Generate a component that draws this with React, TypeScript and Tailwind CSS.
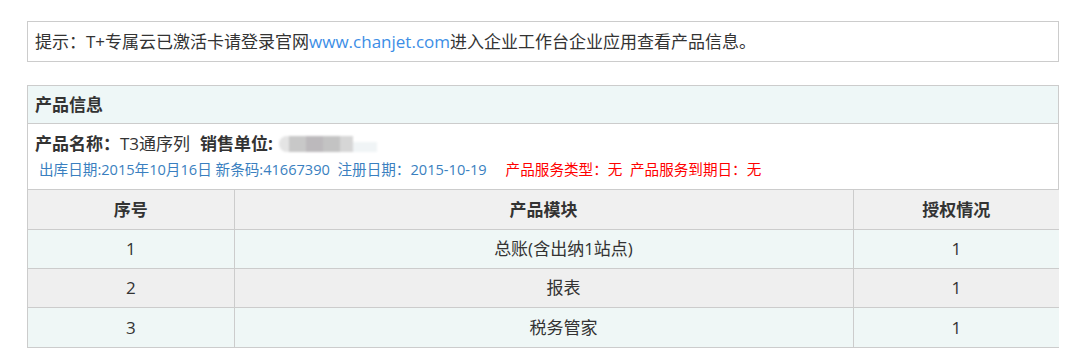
import React from 'react';

const rows = [
  { no: '1', mod: '总账(含出纳1站点)', auth: '1', bg: 'bg-[#eff7f6]' },
  { no: '2', mod: '报表', auth: '1', bg: 'bg-[#efefef]' },
  { no: '3', mod: '税务管家', auth: '1', bg: 'bg-[#eff7f6]' },
];

const App: React.FC = () => {
  return (
    <div className="bg-white w-[1076px] h-[363px] pt-[21px] pl-[27px] text-[#333] font-['Open_Sans','Noto_Sans_CJK_SC',sans-serif]">
      {/* tip */}
      <div className="w-[1032px] h-[41px] border border-[#cccccc] flex items-center pl-[7px] text-[17px]">
        提示：T+专属云已激活卡请登录官网<span className="text-[#3c8ee6]">www.chanjet.com</span>进入企业工作台企业应用查看产品信息。
      </div>

      {/* product panel */}
      <div className="w-[1032px] mt-[23px] border border-[#cccccc]">
        <div className="h-[38px] bg-[#eef7f7] border-b border-[#cccccc] flex items-center pl-[7px] text-[17px] font-bold">
          产品信息
        </div>
        <div className="h-[65px] pl-[7px] flex flex-col">
          <div className="flex items-center h-[40px] text-[17px]">
            <span className="font-bold">产品名称：</span>
            <span>T3通序列</span>
            <span className="font-bold ml-[10px]">销售单位:</span>
            <span className="ml-[6px] flex items-center h-[16px] blur-[1px]">
              <span className="w-[10px] h-[16px] bg-[#e4e4e4] rounded-l-full" />
              <span className="w-[17px] h-[16px] bg-[#c8c8c8]" />
              <span className="w-[17px] h-[16px] bg-[#bcb9bc]" />
              <span className="w-[17px] h-[16px] bg-[#c3c3c3]" />
              <span className="w-[13px] h-[16px] bg-[#d6d6d6]" />
              <span className="w-[24px] h-[10px] mt-[6px] bg-[#f0f4f6]" />
            </span>
          </div>
          <div className="flex items-center h-[12px] text-[14.6px] pl-[4px] whitespace-pre">
            <span className="text-[#3a7fc0]">出库日期:2015年10月16日 新条码:41667390  注册日期：2015-10-19</span>
            <span className="text-[#ff0000] ml-[19px]">产品服务类型：无  产品服务到期日：无</span>
          </div>
        </div>

        <table className="w-full border-collapse text-[17px] table-fixed">
          <colgroup>
            <col className="w-[206px]" />
            <col className="w-[619px]" />
            <col className="w-[206px]" />
          </colgroup>
          <thead>
            <tr className="bg-[#f0f0f0] h-[40px]">
              <th className="border-t border-r border-[#cccccc] font-bold">序号</th>
              <th className="border-t border-r border-[#cccccc] font-bold">产品模块</th>
              <th className="border-t border-[#cccccc] font-bold">授权情况</th>
            </tr>
          </thead>
          <tbody>
            {rows.map((r) => (
              <tr key={r.no} className={`${r.bg} h-[39px]`}>
                <td className="border-t border-r border-[#cccccc] text-center">{r.no}</td>
                <td className="border-t border-r border-[#cccccc] text-center pl-[40px]">{r.mod}</td>
                <td className="border-t border-[#cccccc] text-center">{r.auth}</td>
              </tr>
            ))}
          </tbody>
        </table>
      </div>
    </div>
  );
};

export default App;
